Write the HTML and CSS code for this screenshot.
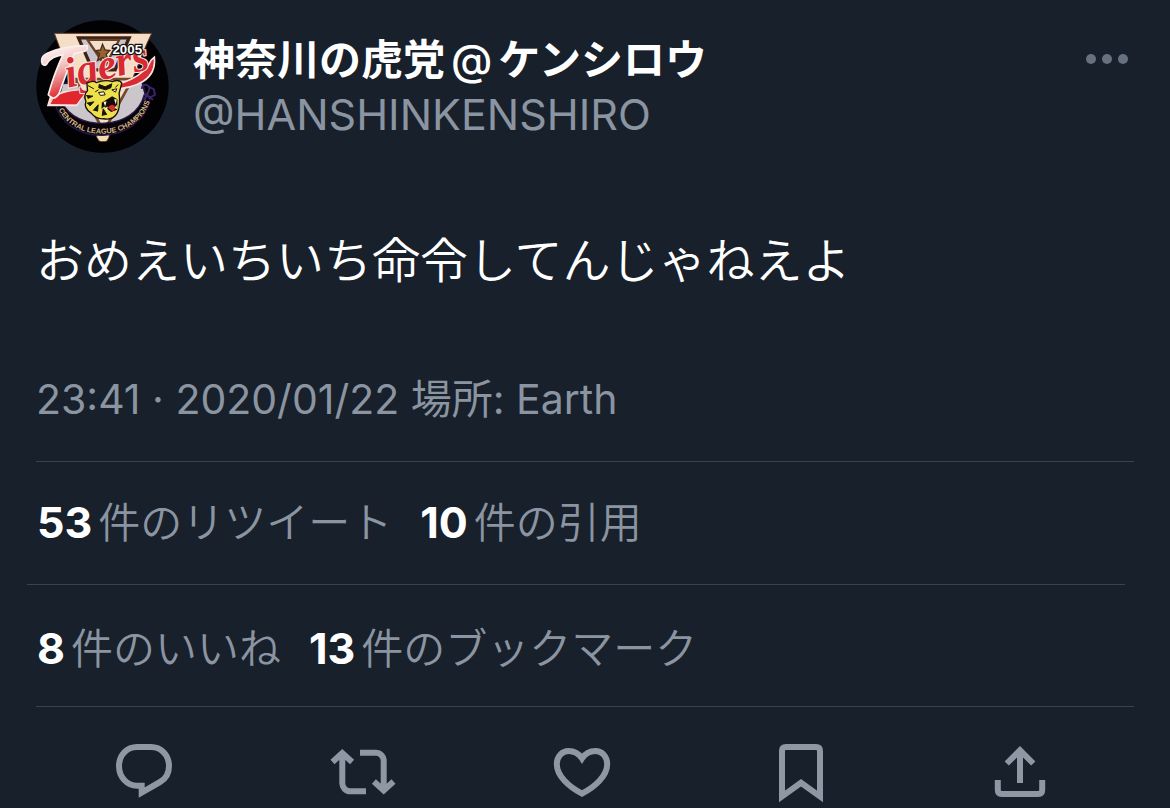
FILE: index.html
```
<!DOCTYPE html>
<html lang="ja">
<head>
    <meta charset="utf-8">
    <meta name="viewport" content="width=device-width, initial-scale=1.0"/>
    <title>神奈川の虎党@ケンシロウ</title>
    <link rel="stylesheet" href="styles.css">
</head>
<body>
    <article class="tweet">
        <header class="tweet-header">
            <svg class="avatar" viewBox="0 0 400 400" role="img" aria-label="Tigers 2005">
                <defs>
                    <linearGradient id="script-red" x1="0" y1="0" x2="1" y2="0">
                        <stop offset="0" stop-color="#f6dedb"/>
                        <stop offset="0.25" stop-color="#e8605c"/>
                        <stop offset="0.5" stop-color="#d92229"/>
                        <stop offset="1" stop-color="#d8323a"/>
                    </linearGradient>
                    <linearGradient id="t-fade" x1="0" y1="0" x2="0.3" y2="1">
                        <stop offset="0" stop-color="#fff"/>
                        <stop offset="0.45" stop-color="#f3c5c2"/>
                        <stop offset="1" stop-color="#dc2a30"/>
                    </linearGradient>
                    <path id="league-arc" d="M66 264 C108 370 302 374 344 240"/>
                </defs>
                <circle cx="200" cy="200" r="199" fill="#020103"/>
                <!-- shield -->
                <path d="M55 40 H348 L333 72 L214 364 H189 L70 80Z" fill="#f4dfc6" stroke="#5d3a27" stroke-width="3"/>
                <path d="M64 246 A142 142 0 0 0 333 240 L318 180 L80 190Z" fill="#cbc5cc" stroke="#241333" stroke-width="6"/>
                <path d="M118 178 H290 L204 335Z" fill="#f0dfca" stroke="#74492b" stroke-width="8"/>
                <path d="M128 54 H280 L238 150 H170Z" fill="#c9c3ca" stroke="#3b2216" stroke-width="10"/>
                <path d="M155 60 H250 L208 138Z" fill="#f0e0cd" stroke="#6b4027" stroke-width="7"/>
                <path d="M200 73 L208 90 L222 92 L211 103 L218 124 L201 113 L185 122 L191 102 L180 92 L194 90Z" fill="#95612d" stroke="#4c2b18" stroke-width="4"/>
                <path d="M56 245 C82 380 315 385 345 232 L325 226 C299 333 116 337 79 247Z" fill="#08040a" stroke="#291744" stroke-width="4"/>
                <path d="M181 350 H220 L209 365 H194Z" fill="#f4dcae"/>
                <text class="league" text-anchor="middle"><textPath href="#league-arc" startOffset="50%">CENTRAL LEAGUE CHAMPIONS</textPath></text>
                <path d="M318 207 Q320 192 332 195 Q346 199 338 216 L325 242 M337 200 L354 208 L358 225 L338 236 M329 222 L352 240" fill="none" stroke="#3b246b" stroke-width="6"/>
                <!-- team name with the swash below -->
                <path d="M43 234 C91 204 141 216 191 202 C253 199 326 171 346 121 L356 112 C363 179 303 206 228 208 L149 218 Q132 242 122 257 L36 257Z" fill="url(#script-red)" stroke="#f5e4e1" stroke-width="5"/>
                <path d="M52 236 C91 206 141 216 191 202 L149 218 L122 253 H44Z" fill="#e1262d"/>
                <path d="M19 133 Q10 107 41 97 Q94 76 154 77 Q158 92 140 96 L115 101 Q90 161 69 222 Q54 246 37 225 Q53 165 81 104 Q47 110 35 128 Q29 141 19 133Z" fill="url(#t-fade)" stroke="#f9eeee" stroke-width="5"/>
                <text class="team" transform="translate(96 204) rotate(-13)">igers</text>
                <text class="year" x="230" y="103">2005</text>
                <!-- tiger head -->
                <path d="M153 190 Q171 180 181 188 Q209 178 230 185 Q250 177 258 190 L250 220 Q255 260 244 280 Q232 302 203 297 Q181 299 166 280 Q143 266 150 244 Q142 224 155 213Z" fill="#eee04a" stroke="#15110c" stroke-width="4"/>
                <path d="M190 194 L208 201 L228 192 L225 204 L209 210 L189 204Z M156 197 L174 207 M151 227 L171 229 L156 236 M153 250 L174 246 L162 259 M172 272 L187 255 L185 275 M199 288 L202 267 L213 285 M239 203 L247 194 M178 216 L188 210" fill="#17130d" stroke="#17130d" stroke-width="3"/>
                <path d="M188 218 L204 216 L208 225 L194 227Z M228 210 L243 207 L239 217Z" fill="#fff5d9" stroke="#17130d" stroke-width="3"/>
                <path d="M212 240 L229 229 L245 238 L244 270 L226 277 L205 260 L197 267 L198 248Z" fill="#160b09"/>
                <path d="M216 263 Q232 246 240 265 L231 276Z" fill="#d12e2a"/>
                <path d="M203 246 L208 260 L212 245Z M235 238 L240 254 L243 238Z M208 265 L213 273 L216 260Z M237 265 L242 255 L244 268Z" fill="#fff8df"/>
            </svg>
            <div class="author">
                <h1 class="author-name">神奈川の虎党<span class="at-sign">@</span>ケンシロウ</h1>
                <a class="author-handle" href="#">@HANSHINKENSHIRO</a>
            </div>
            <button class="more-button" type="button" aria-label="もっと見る">
                <svg viewBox="0 0 48 24">
                    <circle cx="8" cy="12" r="5"/>
                    <circle cx="24" cy="12" r="5"/>
                    <circle cx="40" cy="12" r="5"/>
                </svg>
            </button>
        </header><!-- .tweet-header -->

        <p class="tweet-text">おめえいちいち命令してんじゃねえよ</p>
        <p class="tweet-date">23:41 · 2020/01/22 場所: Earth</p>

        <div class="stats">
            <a class="stat" href="#"><strong>53</strong>件のリツイート</a>
            <a class="stat" href="#"><strong>10</strong>件の引用</a>
        </div>
        <hr class="divider">
        <div class="stats stats-last">
            <a class="stat" href="#"><strong>8</strong>件のいいね</a>
            <a class="stat" href="#"><strong>13</strong>件のブックマーク</a>
        </div>

        <div class="actions">
            <button class="action-button" type="button" aria-label="返信">
                <svg viewBox="0 0 64 64"><path d="M25 7 H39 C49 7 57 15 57 26 C57 33 53.5 39 48 42 L29.7 52.5 V45.7 H25 C15 45.7 7 37 7 26 C7 15 15 7 25 7Z"/></svg>
            </button>
            <button class="action-button" type="button" aria-label="リツイート">
                <svg viewBox="0 0 64 64"><path d="M11.3 13 V43 A8 8 0 0 0 19.3 51.3 H35 M1.5 22 L11.3 13 L21.1 22 M29 12.7 H44.7 A8 8 0 0 1 52.7 20.7 V50 M42.9 41.5 L52.7 50.5 L62.5 41.5"/></svg>
            </button>
            <button class="action-button" type="button" aria-label="いいね">
                <svg viewBox="0 0 64 64"><path d="M32 18.5 C27.5 11.5 21 11 18.5 11 C12 11 6.8 16.5 6.8 24 C6.8 36 19 47 32 53.6 C45 47 57.2 36 57.2 24 C57.2 16.5 52 11 45.5 11 C43 11 36.5 11.5 32 18.5Z"/></svg>
            </button>
            <button class="action-button" type="button" aria-label="ブックマーク">
                <svg viewBox="0 0 64 64"><path d="M17 7 H47 Q51 7 51 11 V56.5 L32 42.8 L13 56.5 V11 Q13 7 17 7Z"/></svg>
            </button>
            <button class="action-button" type="button" aria-label="共有">
                <svg viewBox="0 0 64 64"><path d="M32 10 V43 M18.7 23.5 L32 10.2 L45.3 23.5 M9.8 40 V50 Q9.8 54 13.8 54 H50.2 Q54.2 54 54.2 50 V40"/></svg>
            </button>
        </div><!-- .actions -->
    </article>
</body>
</html>
```
FILE: styles.css
```
* {
    margin: 0;
    padding: 0;
    box-sizing: border-box;
}

body {
    background: #18202b;
    color: #fff;
    font-family: Inter, "Noto Sans CJK JP", sans-serif;
    font-size: 42px;
    line-height: 52px;
}

a {
    color: inherit;
    text-decoration: none;
}

button {
    background: none;
    border: 0;
    cursor: pointer;
}

svg {
    display: block;
}

.tweet {
    padding-top: 20px;
}

.tweet-header {
    display: flex;
    align-items: flex-start;
    padding: 0 39px 0 36px;
}

.avatar {
    flex: none;
    width: 133px;
    height: 133px;
}

.league {
    fill: #d3b685;
    font: bold 22px "Liberation Sans Narrow", "Liberation Sans", sans-serif;
}

.team {
    fill: #d92931;
    stroke: #f8e9e6;
    stroke-width: 6px;
    paint-order: stroke;
    font: italic bold 128px "Liberation Serif", serif;
}

.year {
    fill: #fff;
    stroke: #15100f;
    stroke-width: 8px;
    paint-order: stroke;
    font: bold 40px "Liberation Sans Narrow", "Liberation Sans", sans-serif;
}

.author {
    flex: 1;
    min-width: 0;
    padding: 14px 0 0 24px;
}

.author-name {
    font-size: 42px;
    font-weight: 700;
}

.at-sign {
    margin: 0 6px;
    font-weight: 500;
}

.author-handle {
    display: block;
    color: #8b94a1;
    font-size: 43px;
    line-height: 56px;
}

.more-button svg {
    width: 48px;
    height: 24px;
    margin-top: 27px;
    fill: #667180;
}

.tweet-text {
    padding: 76px 36px 0;
    font-size: 48px;
    font-weight: 350;
    line-height: 64px;
}

.tweet-date {
    margin: 0 36px;
    padding: 80px 0 36px;
    border-bottom: 1px solid #3a424e;
    color: #8b94a1;
    font-size: 41px;
}

.stats {
    display: flex;
    flex-wrap: wrap;
    gap: 0 28px;
    padding: 34px 37px 35px;
}

.stats-last {
    margin: 0 36px;
    padding: 37px 0 31px 1px;
    border-bottom: 1px solid #3a424e;
}

.stat {
    color: #8b94a1;
    font-weight: 350;
}

.stat strong {
    margin-right: 6px;
    color: #fff;
    font-size: 43px;
    font-weight: 700;
}

.divider {
    margin: 0 45px 0 27px;
    border: 0;
    border-top: 1px solid #3a424e;
}

.actions {
    display: grid;
    grid-template-columns: repeat(5, 1fr);
    padding: 33px 40px 0 34px;
}

.action-button {
    display: flex;
    justify-content: center;
}

.action-button svg {
    width: 64px;
    height: 64px;
    overflow: visible;
    fill: none;
    stroke: #8f97a4;
    stroke-width: 6px;
}
```
